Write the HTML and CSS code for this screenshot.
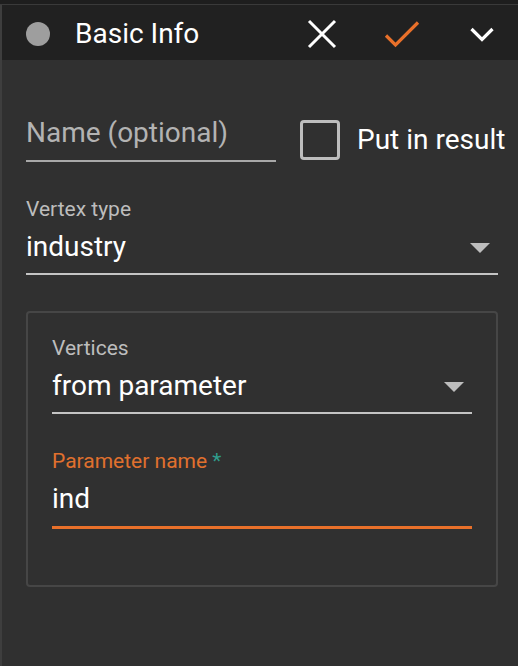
FILE: index.html
```html
<!DOCTYPE html>
<html>
<head>
<meta charset="utf-8">
<link rel="stylesheet" href="styles.css">
</head>
<body>
<div class="topbar"></div>
<div class="panel">
  <header class="header">
    <span class="dot"></span>
    <span class="title">Basic Info</span>
    <span class="icons">
      <button class="icon-btn" aria-label="Cancel">
        <svg width="48" height="48" viewBox="0 0 48 48"><path d="M11 11L37 37M37 11L11 37" stroke="#ffffff" stroke-width="3" fill="none"/></svg>
      </button>
      <button class="icon-btn" aria-label="Apply">
        <svg width="48" height="48" viewBox="0 0 48 48"><polyline points="8,25.5 17.5,35 40,12.5" stroke="#e8702a" stroke-width="3.2" fill="none"/></svg>
      </button>
      <button class="icon-btn" aria-label="Collapse">
        <svg width="48" height="48" viewBox="0 0 48 48"><polyline points="13.5,19 24,29.5 34.5,19" stroke="#ffffff" stroke-width="3.2" fill="none"/></svg>
      </button>
    </span>
  </header>
  <main class="content">
    <div class="name-row">
      <div class="name-field">
        <span class="placeholder">Name (optional)</span>
      </div>
      <label class="check">
        <span class="box"></span>
        <span class="check-text">Put in result</span>
      </label>
    </div>

    <div class="field">
      <div class="label">Vertex type</div>
      <div class="value-row">
        <span class="value">industry</span>
        <span class="arrow"></span>
      </div>
    </div>

    <div class="group">
      <div class="field">
        <div class="label">Vertices</div>
        <div class="value-row">
          <span class="value">from parameter</span>
          <span class="arrow"></span>
        </div>
      </div>
      <div class="field focused">
        <div class="label">Parameter name <span class="req">*</span></div>
        <div class="value-row">
          <span class="value">ind</span>
        </div>
      </div>
    </div>
  </main>
</div>
</body>
</html>
```
FILE: styles.css
```css
* { box-sizing: border-box; }
html, body {
  margin: 0;
  padding: 0;
  height: 100%;
}
body {
  background: #303030;
  font-family: Roboto, "Liberation Sans", sans-serif;
  color: #ffffff;
  overflow: hidden;
}
.topbar {
  height: 5px;
  background: #1e1e1e;
  border-bottom: 1px solid #3a3a3a;
}
.panel {
  border-left: 2px solid #3e3e3e;
  height: calc(100% - 5px);
}
.header {
  height: 55px;
  background: #212121;
  display: flex;
  align-items: center;
  padding: 3px 12px 0 24px;
}
.dot {
  width: 24px;
  height: 24px;
  border-radius: 50%;
  background: #9e9e9e;
  flex: none;
}
.title {
  margin-left: 25px;
  font-size: 28px;
  line-height: 32px;
  color: #ffffff;
}
.icons {
  margin-left: auto;
  display: flex;
  gap: 32px;
}
.icon-btn {
  width: 48px;
  height: 48px;
  padding: 0;
  border: 0;
  background: transparent;
  display: flex;
}
.content {
  padding: 57px 20px 0 24px;
}
.name-row {
  display: flex;
  align-items: flex-start;
  margin-bottom: 35px;
}
.name-field {
  flex: none;
  width: 250px;
  padding-bottom: 11px;
  border-bottom: 2px solid #a8a8a8;
}
.placeholder {
  display: block;
  font-size: 28px;
  line-height: 32px;
  color: #b3b3b3;
}
.check {
  flex: none;
  margin-left: 24px;
  margin-top: 3px;
  display: flex;
  align-items: center;
}
.box {
  width: 40px;
  height: 40px;
  border: 3px solid #bdbdbd;
  border-radius: 4px;
  flex: none;
}
.check-text {
  margin-left: 17px;
  font-size: 28px;
  line-height: 32px;
  color: #ffffff;
  white-space: nowrap;
}
.field {
  border-bottom: 2px solid #c4c4c4;
  padding-bottom: 10px;
}
.label {
  font-size: 21px;
  line-height: 24px;
  color: #bdbdbd;
  margin-bottom: 10px;
}
.value-row {
  display: flex;
  align-items: center;
}
.value {
  font-size: 28px;
  line-height: 32px;
  color: #ffffff;
}
.arrow {
  margin-left: auto;
  margin-right: 8px;
  margin-top: 2px;
  width: 0;
  height: 0;
  border-left: 10px solid transparent;
  border-right: 10px solid transparent;
  border-top: 10px solid #bdbdbd;
}
.group {
  margin-top: 36px;
  border: 2px solid #464646;
  border-radius: 4px;
  padding: 23px 24px 56px 24px;
}
.group .field + .field {
  margin-top: 35px;
}
.focused {
  border-bottom: 3px solid #e8702a;
  padding-bottom: 11px;
}
.focused .label {
  color: #e0702e;
}
.req {
  color: #2f9c8c;
}
```
